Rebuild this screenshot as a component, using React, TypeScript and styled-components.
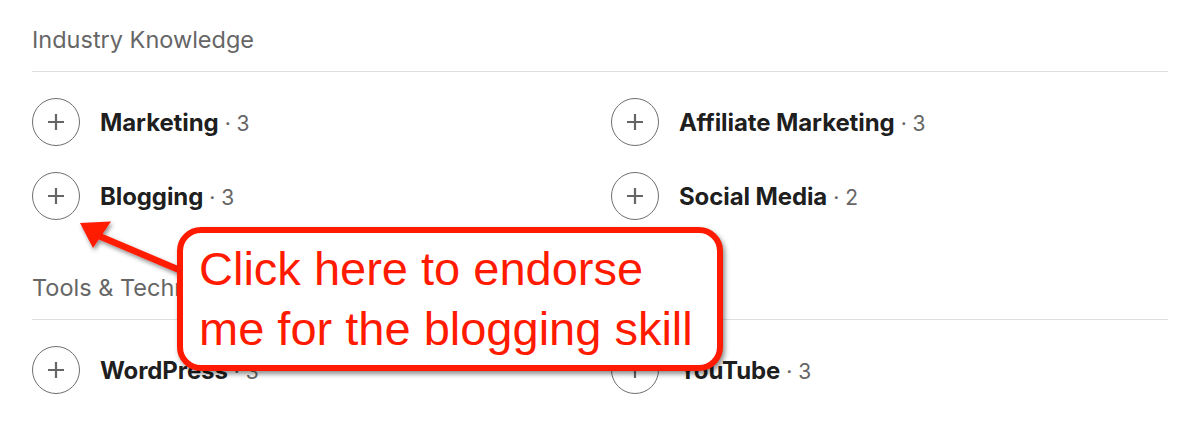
import React from "react";
import styled, { createGlobalStyle } from "styled-components";

const Global = createGlobalStyle`
  html, body { margin: 0; padding: 0; background: #fff; }
  body { font-family: Inter, "Noto Sans", "Liberation Sans", sans-serif; -webkit-font-smoothing: antialiased; }
  * { box-sizing: border-box; }
`;

const Page = styled.div`
  position: relative;
  width: 1200px;
  height: 436px;
  overflow: hidden;
  padding: 24px 32px 0 32px;
  display: flex;
  flex-direction: column;
  gap: 52px;
`;

const Section = styled.section`
  display: flex;
  flex-direction: column;
`;

const Heading = styled.h3`
  margin: 0;
  font-size: 23.5px;
  line-height: 32px;
  font-weight: 400;
  color: #666666;
  letter-spacing: 0;
  white-space: nowrap;
`;

const Divider = styled.hr`
  margin: 15px 0 0 0;
  border: 0;
  height: 1px;
  background: #dedede;
`;

const Grid = styled.ul`
  list-style: none;
  margin: 0;
  padding: 26px 0 0 0;
  display: grid;
  grid-template-columns: 1fr 1fr;
  column-gap: 22px;
  row-gap: 26px;
`;

const Skill = styled.li`
  display: flex;
  align-items: center;
  gap: 20px;
  height: 48px;
`;

const PlusButton = styled.button`
  width: 48px;
  height: 48px;
  flex: none;
  border-radius: 50%;
  border: 1.5px solid #6f6f6f;
  background: #fff;
  padding: 0;
  display: flex;
  align-items: center;
  justify-content: center;
  color: #666;
`;

const Name = styled.span`
  font-size: 24px;
  font-weight: 700;
  color: rgba(0, 0, 0, 0.9);
  letter-spacing: -0.1px;
`;

const Count = styled.span`
  font-size: 21px;
  font-weight: 400;
  color: #666;
  margin-left: 6px;
`;

const Callout = styled.div`
  position: absolute;
  left: 177px;
  top: 227px;
  width: 546px;
  height: 144px;
  border: 6px solid #ff1a00;
  border-radius: 24px;
  background: #fff;
  box-shadow: 2px 3px 5px rgba(0, 0, 0, 0.45);
  padding: 6px 10px 0 16px;
  font-family: "Liberation Sans", Arial, sans-serif;
  font-size: 47px;
  line-height: 60px;
  color: #ff1a00;
  z-index: 2;
`;

const ArrowSvg = styled.svg`
  position: absolute;
  left: 0;
  top: 0;
  z-index: 1;
  overflow: visible;
`;

const Plus = () => (
  <svg width="18" height="18" viewBox="0 0 18 18" aria-hidden>
    <path d="M9 1v16M1 9h16" stroke="#666" strokeWidth="2.2" fill="none" />
  </svg>
);

type SkillData = { name: string; count: number };

const SkillItem = ({ name, count }: SkillData) => (
  <Skill>
    <PlusButton aria-label={`Endorse ${name}`}>
      <Plus />
    </PlusButton>
    <span>
      <Name>{name}</Name>
      <Count>· {count}</Count>
    </span>
  </Skill>
);

const sections: { title: string; skills: SkillData[] }[] = [
  {
    title: "Industry Knowledge",
    skills: [
      { name: "Marketing", count: 3 },
      { name: "Affiliate Marketing", count: 3 },
      { name: "Blogging", count: 3 },
      { name: "Social Media", count: 2 },
    ],
  },
  {
    title: "Tools & Technologies",
    skills: [
      { name: "WordPress", count: 3 },
      { name: "YouTube", count: 3 },
    ],
  },
];

export default function App() {
  return (
    <>
      <Global />
      <Page>
        {sections.map((s) => (
          <Section key={s.title}>
            <Heading>{s.title}</Heading>
            <Divider />
            <Grid>
              {s.skills.map((k) => (
                <SkillItem key={k.name} {...k} />
              ))}
            </Grid>
          </Section>
        ))}
        <ArrowSvg width="1200" height="436" viewBox="0 0 1200 436">
          <defs>
            <filter id="sh" x="-20%" y="-20%" width="140%" height="140%">
              <feDropShadow dx="1.5" dy="2.5" stdDeviation="2" floodColor="#000" floodOpacity="0.45" />
            </filter>
          </defs>
          <g filter="url(#sh)" fill="#ff1a00" stroke="none">
            <path d="M183 268 L98 232 L95.5 238 L180.5 274 Z" />
            <path d="M80 223 L111 221.5 L93 248 Z" />
          </g>
        </ArrowSvg>
        <Callout>
          Click here to endorse
          <br />
          me for the blogging skill
        </Callout>
      </Page>
    </>
  );
}
